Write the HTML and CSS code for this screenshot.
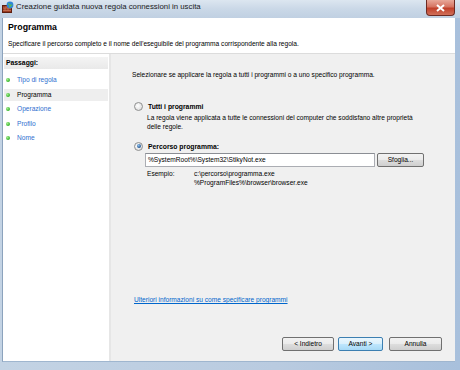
FILE: index.html
```html
<!DOCTYPE html>
<html lang="it">
<head>
    <meta charset="UTF-8">
    <title>Creazione guidata nuova regola connessioni in uscita</title>
    <link rel="stylesheet" href="styles.css">
</head>
<body>
    <div class="window">
        <!-- Title bar -->
        <div class="titlebar">
            <svg class="app-icon" width="12" height="12" viewBox="0 0 12 12">
                <rect x="0.5" y="4.5" width="9" height="7" fill="#9b3b22" stroke="#5e1f10"/>
                <path d="M1 7h8M1 9.5h8M4 5v2M7 5v2M3 7v2.5M6 7v2.5" stroke="#d98a6a" stroke-width="0.6"/>
                <circle cx="8" cy="4" r="3.4" fill="#2f87d8"/>
                <path d="M6 2.6c1 .4 1.2 1.4 2 1.6.8.2 1.4-.6 2.3.2M7.2 6.4c.3-.9 1.4-1 1.5-1.9" stroke="#5cc24a" stroke-width="1.1" fill="none"/>
            </svg>
            <span class="title">Creazione guidata nuova regola connessioni in uscita</span>
            <div class="close-btn">
                <svg width="9" height="8" viewBox="0 0 9 8">
                    <path d="M1 1l7 6M8 1l-7 6" stroke="#fff" stroke-width="2"/>
                </svg>
            </div>
        </div>

        <div class="client">
            <!-- Header -->
            <div class="header">
                <h1>Programma</h1>
                <p>Specificare il percorso completo e il nome dell'eseguibile del programma corrispondente alla regola.</p>
            </div>

            <div class="main">
                <!-- Steps list -->
                <div class="steps">
                    <div class="steps-title">Passaggi:</div>
                    <ul>
                        <li><span class="dot"></span>Tipo di regola</li>
                        <li class="current"><span class="dot"></span>Programma</li>
                        <li><span class="dot"></span>Operazione</li>
                        <li><span class="dot"></span>Profilo</li>
                        <li><span class="dot"></span>Nome</li>
                    </ul>
                </div>

                <!-- Page content -->
                <div class="pane">
                    <p class="intro">Selezionare se applicare la regola a tutti i programmi o a uno specifico programma.</p>

                    <div class="option first">
                        <div class="option-row"><span class="radio"></span><span class="option-label">Tutti i programmi</span></div>
                        <p class="option-desc">La regola viene applicata a tutte le connessioni del computer che soddisfano altre proprietà<br>delle regole.</p>
                    </div>

                    <div class="option second">
                        <div class="option-row"><span class="radio checked"></span><span class="option-label">Percorso programma:</span></div>
                        <div class="path-row">
                            <div class="textbox">%SystemRoot%\System32\StikyNot.exe</div>
                            <div class="btn browse">Sfoglia...</div>
                        </div>
                        <div class="example">
                            <span class="example-label">Esempio:</span>
                            <span class="example-values">c:\percorso\programma.exe<br>%ProgramFiles%\browser\browser.exe</span>
                        </div>
                    </div>

                    <a class="more-link" href="#">Ulteriori informazioni su come specificare programmi</a>

                    <div class="buttons">
                        <div class="btn back">&lt; Indietro</div>
                        <div class="btn next">Avanti &gt;</div>
                        <div class="btn cancel">Annulla</div>
                    </div>
                </div>
            </div>
        </div>
    </div>
</body>
</html>
```

FILE: styles.css
```css
body {
    margin: 0;
    font-family: 'Liberation Sans', Arial, sans-serif;
    font-size: 6.6px;
    color: #000;
    background: #fff;
}

.window {
    width: 460px;
    height: 370px;
    display: flex;
    flex-direction: column;
    background: linear-gradient(90deg, #c3d3e4 0%, #b9cbe0 60%, #a8c0dc 100%);
    overflow: hidden;
}

/* Title bar */
.titlebar {
    height: 18px;
    display: flex;
    align-items: flex-start;
    padding-left: 2px;
    background: linear-gradient(180deg, #dce6f0 0%, #cad8e7 50%, #c0d0e2 100%);
}

.app-icon {
    margin-top: 1px;
}

.title {
    margin-left: 2px;
    margin-top: 2px;
    font-size: 7.8px;
    line-height: 9px;
    color: #1a1a1a;
    flex: 1;
}

.close-btn {
    width: 29px;
    height: 16px;
    margin-right: 5px;
    border: 1px solid #6d2a22;
    border-top: none;
    border-radius: 0 0 4px 4px;
    background: linear-gradient(180deg, #e8a899 0%, #d67462 45%, #c1402a 55%, #d0705a 100%);
    display: flex;
    align-items: center;
    justify-content: center;
    box-sizing: border-box;
}

/* Client area */
.client {
    flex: 1;
    margin: 0 5px 8px 2px;
    display: flex;
    flex-direction: column;
    background: #f0f0f0;
    border-left: 1px solid #8ca3bd;
    border-bottom: 1px solid #9fb6cf;
}

.header {
    height: 36px;
    background: #fff;
    border-bottom: 1px solid #dcdcdc;
    padding-left: 5px;
    box-sizing: border-box;
}

.header h1 {
    margin: 3px 0 0;
    font-size: 8.8px;
    line-height: 12px;
    font-weight: bold;
}

.header p {
    margin: 6px 0 0;
    line-height: 9px;
}

.main {
    flex: 1;
    display: flex;
}

/* Steps */
.steps {
    width: 104px;
    background: #fff;
    border-right: 2px solid #e6e6e6;
    padding: 3px 1px 0 1px;
}

.steps-title {
    height: 12px;
    line-height: 12px;
    padding-left: 2px;
    font-weight: bold;
    font-size: 6.8px;
    background: linear-gradient(180deg, #f4f4f4, #e9e9e9);
}

.steps ul {
    list-style: none;
    margin: 5px 0 0;
    padding: 0;
}

.steps li {
    height: 12px;
    line-height: 12px;
    margin-bottom: 2.5px;
    color: #2f6fcf;
    display: flex;
    align-items: center;
}

.steps li.current {
    color: #000;
    background: #eeeeee;
}

.dot {
    width: 4px;
    height: 4px;
    border-radius: 50%;
    margin: 0 7px 0 2px;
    background: radial-gradient(circle at 35% 35%, #a6ec8f, #33b52a 70%);
}

/* Pane */
.pane {
    flex: 1;
    display: flex;
    flex-direction: column;
    padding: 0 13px 10px 21px;
}

.pane p {
    margin: 0;
}

.intro {
    margin-top: 16px !important;
    line-height: 10px;
}

.option.first {
    margin-top: 21px;
}

.option.second {
    margin-top: 10px;
}

.option-row {
    display: flex;
    align-items: center;
    height: 10px;
    padding-left: 2px;
}

.radio {
    width: 7px;
    height: 7px;
    border-radius: 50%;
    border: 1px solid #8e8f8f;
    background: radial-gradient(circle at 40% 40%, #fff, #d5d5d5);
    display: flex;
    align-items: center;
    justify-content: center;
}

.radio.checked::after {
    content: '';
    width: 4px;
    height: 4px;
    border-radius: 50%;
    background: radial-gradient(circle at 40% 35%, #8fc2ef, #1c4e8a 75%);
}

.option-label {
    margin-left: 5px;
    font-weight: bold;
    font-size: 6.8px;
}

.option-desc {
    padding-left: 15px;
    margin-top: 2px !important;
    line-height: 9px;
}

.path-row {
    display: flex;
    margin-top: 2px;
    padding-left: 13px;
}

.textbox {
    width: 230px;
    height: 14px;
    box-sizing: border-box;
    background: #fff;
    border: 1px solid #abadb3;
    border-top-color: #8b8e94;
    line-height: 12px;
    padding-left: 2px;
}

.btn {
    height: 14px;
    box-sizing: border-box;
    border: 1px solid #707070;
    border-radius: 2px;
    background: linear-gradient(180deg, #f2f2f2 0%, #ebebeb 48%, #dddddd 52%, #cfcfcf 100%);
    text-align: center;
    line-height: 12px;
}

.browse {
    width: 47px;
    margin-left: 2px;
}

.example {
    display: flex;
    margin-top: 2px;
    padding-left: 15px;
    line-height: 9px;
}

.example-label {
    width: 47px;
}

.more-link {
    margin-top: auto;
    margin-left: 2px;
    color: #0066cc;
    line-height: 10px;
    text-decoration: underline;
    align-self: flex-start;
}

.buttons {
    display: flex;
    justify-content: flex-end;
    margin-top: 32px;
}

.back {
    width: 52px;
}

.next {
    width: 45px;
    margin-left: 4px;
    border-color: #3c7fb1;
    background: linear-gradient(180deg, #eaf6fd 0%, #d9f0fc 48%, #bee6fd 52%, #a7d9f5 100%);
}

.cancel {
    width: 53px;
    margin-left: 6px;
}
```
